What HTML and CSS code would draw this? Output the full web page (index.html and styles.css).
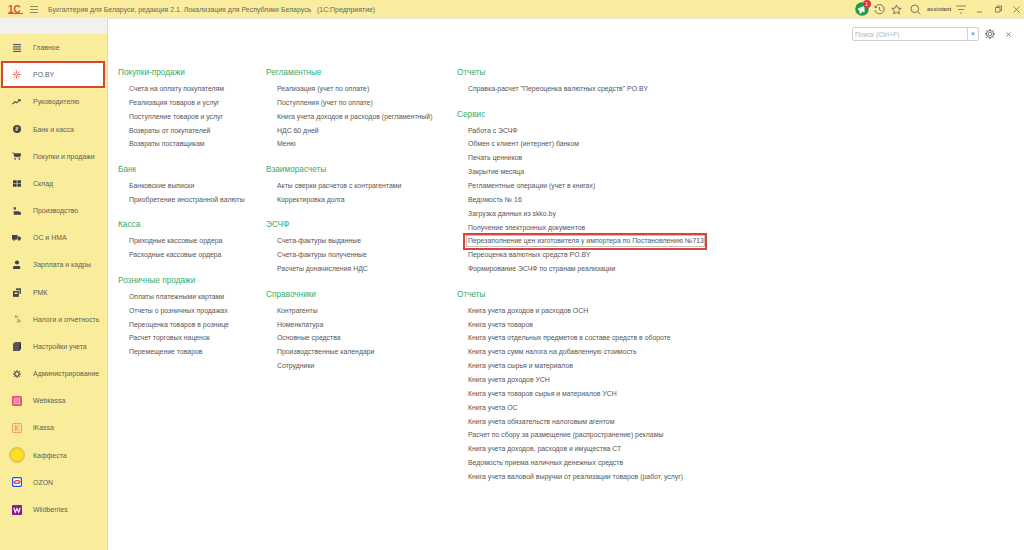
FILE: index.html
```html
<!DOCTYPE html>
<html lang="ru">
<head>
<meta charset="utf-8">
<title>Бухгалтерия для Беларуси</title>
<link rel="stylesheet" href="styles.css">
</head>
<body>
<header class="topbar">
  <svg class="logo" width="16" height="11" viewBox="0 0 16 11"><text x="1" y="8.6" class="logo-text">1С</text><path d="M1 9.5H16" stroke="#e0503a" stroke-width="1"/></svg>
  <svg class="burger" width="8" height="7" viewBox="0 0 8 7"><path d="M0 .5H8M0 3.5H8M0 6.5H8" stroke="#8a8a70" stroke-width="1"/></svg>
  <div class="app-title">Бухгалтерия для Беларуси, редакция 2.1. Локализация для Республики Беларусь&nbsp;&nbsp; (1С:Предприятие)</div>
  <div class="tools">
    <span class="notify">
      <svg width="14" height="14" viewBox="0 0 14 14"><circle cx="7" cy="7" r="6.8" fill="#1e9a4a"/><path d="M3 6.5L9.5 3.5V10.5L6.5 9.2V11.5H4.5V8.4L3 8Z" fill="#fff"/></svg>
      <span class="badge">1</span>
    </span>
    <svg class="tool-clock" width="11" height="11" viewBox="0 0 11 11"><path d="M1.5 3A4.6 4.6 0 1 1 1 6M1 1.5V3.5H3M5.5 3V5.8L7.5 7" fill="none" stroke="#555" stroke-width=".8"/></svg>
    <svg class="tool-star" width="11" height="11" viewBox="0 0 11 11"><path d="M5.5 1L6.9 4.1L10.2 4.4L7.7 6.6L8.4 9.9L5.5 8.2L2.6 9.9L3.3 6.6L.8 4.4L4.1 4.1Z" fill="none" stroke="#555" stroke-width=".8"/></svg>
    <svg class="tool-search" width="11" height="11" viewBox="0 0 11 11"><circle cx="4.8" cy="4.8" r="3.8" fill="none" stroke="#555" stroke-width=".8"/><path d="M7.6 7.6L10.4 10.4" stroke="#555" stroke-width=".8"/></svg>
    <span class="user">assistant</span>
    <svg class="tool-funnel" width="10" height="9" viewBox="0 0 10 9"><path d="M0 1H10M2 4.5H8M4 8H6" stroke="#666" stroke-width=".8"/></svg>
    <svg class="win-min" width="7" height="8" viewBox="0 0 7 8"><path d="M1 7H6" stroke="#666" stroke-width=".8"/></svg>
    <svg class="win-max" width="7" height="8" viewBox="0 0 7 8"><path d="M.5 2.5H5V7H.5ZM2 2.5V1H6.5V5.5H5" fill="none" stroke="#666" stroke-width=".8"/></svg>
    <svg class="win-close" width="7" height="7" viewBox="0 0 7 7"><path d="M.5 .5L6.5 6.5M6.5 .5L.5 6.5" stroke="#666" stroke-width=".8"/></svg>
  </div>
</header>
<div class="body">
  <aside class="sidebar">
    <div class="side-strip"></div>
    <nav class="side-list">
      <a class="side-item"><span class="ico"><svg width="8" height="8" viewBox="0 0 8 8"><path d="M0 .6H8M0 2.9H8M0 5.1H8M0 7.4H8" stroke="#444" stroke-width="1"/></svg></span>Главное</a>
      <a class="side-item active"><span class="ico"><svg width="9" height="9" viewBox="0 0 10 10"><path d="M5 .5V4M5 6V9.5M.5 5H4M6 5H9.5M1.8 1.8L4 4M6 6L8.2 8.2M8.2 1.8L6 4M4 6L1.8 8.2" stroke="#e2412f" stroke-width=".8"/></svg></span>PO.BY</a>
      <a class="side-item"><span class="ico"><svg width="9" height="6" viewBox="0 0 11 7"><path d="M.5 6L3.5 3L5.5 4.5L9.5 1M7.5 .8H10V3" fill="none" stroke="#444" stroke-width="1.3"/></svg></span>Руководителю</a>
      <a class="side-item"><span class="ico"><svg width="8" height="8" viewBox="0 0 10 10"><circle cx="5" cy="5" r="5" fill="#444"/><path d="M4 7.5V2.8H6.2V5H4M3 6.2H6" fill="none" stroke="#f9ec9b" stroke-width=".9"/></svg></span>Банк и касса</a>
      <a class="side-item"><span class="ico"><svg width="9" height="8" viewBox="0 0 11 10"><path d="M0 1H2L2.6 2H11L10 6H3L2 1.5" fill="#444" stroke="#444" stroke-width=".6"/><circle cx="3.7" cy="8.5" r="1.1" fill="#444"/><circle cx="9" cy="8.5" r="1.1" fill="#444"/></svg></span>Покупки и продажи</a>
      <a class="side-item"><span class="ico"><svg width="8" height="7" viewBox="0 0 11 9"><path d="M0 0H5V4H0ZM6 0H11V4H6ZM0 5H5V9H0ZM6 5H11V9H6Z" fill="#444"/></svg></span>Склад</a>
      <a class="side-item"><span class="ico"><svg width="8" height="8" viewBox="0 0 11 10"><path d="M1 10V4.5L3.5 6V4.5L6 6V4.5L11 7V10ZM1 0H4V3H1Z" fill="#444"/></svg></span>Производство</a>
      <a class="side-item"><span class="ico"><svg width="9" height="7" viewBox="0 0 12 9"><path d="M0 1H7.5V7H0ZM8 3H10.5L12 5V7H8Z" fill="#444"/><circle cx="3" cy="7.5" r="1.3" fill="#444"/><circle cx="9.5" cy="7.5" r="1.3" fill="#444"/></svg></span>ОС и НМА</a>
      <a class="side-item"><span class="ico"><svg width="8" height="9" viewBox="0 0 10 11"><circle cx="5" cy="3" r="2.6" fill="#444"/><path d="M1 7.5H9V11H0V9Z" fill="#444"/></svg></span>Зарплата и кадры</a>
      <a class="side-item"><span class="ico"><svg width="8" height="9" viewBox="0 0 11 12"><path d="M0 4H8V12H0Z" fill="#444"/><path d="M4 0H11V8H9V3H4Z" fill="#555"/><path d="M2 6H6V8H2Z" fill="#f9ec9b"/></svg></span>РМК</a>
      <a class="side-item"><span class="ico ico-tax"><span>Кт</span><span class="tax-b">Дт</span></span>Налоги и отчетность</a>
      <a class="side-item"><span class="ico"><svg width="8" height="9" viewBox="0 0 10 11"><path d="M0 2L3 0H10V8L8 11H0Z" fill="#555"/><path d="M8 3V11L10 8V1Z" fill="#333"/></svg></span>Настройки учета</a>
      <a class="side-item"><span class="ico"><svg width="8" height="8" viewBox="0 0 11 11"><circle cx="5.5" cy="5.5" r="3" fill="none" stroke="#444" stroke-width="1.5"/><path d="M5.5 0V2M5.5 9V11M0 5.5H2M9 5.5H11M1.6 1.6L3 3M8 8L9.4 9.4M9.4 1.6L8 3M3 8L1.6 9.4" stroke="#444" stroke-width="1.3"/></svg></span>Администрирование</a>
      <a class="side-item"><span class="ico"><svg width="10" height="10" viewBox="0 0 11 11"><rect width="11" height="11" rx="1.5" fill="#ef4f78"/><rect x="2" y="2" width="7" height="7" fill="#f9b6c8"/><path d="M2 4.3H9M2 6.6H9M4.3 2V9M6.6 2V9" stroke="#ef4f78" stroke-width=".6"/></svg></span>Webkassa</a>
      <a class="side-item"><span class="ico"><svg width="10" height="10" viewBox="0 0 11 11"><rect x=".5" y=".5" width="10" height="10" rx="1" fill="#fbdf9c" stroke="#f2963f"/><path d="M4 2.5V8.5M7.5 2.5L4.5 5.5L7.5 8.5" fill="none" stroke="#f0903c"/></svg></span>iKassa</a>
      <a class="side-item"><span class="ico"><svg width="16" height="16" viewBox="0 0 16 16"><circle cx="8" cy="8" r="7.5" fill="#f4d23a" stroke="#e0bc5c"/><circle cx="8" cy="8" r="5" fill="#fbe21c"/></svg></span>Каффеста</a>
      <a class="side-item"><span class="ico"><svg width="10" height="10" viewBox="0 0 11 11"><rect width="11" height="11" rx="2" fill="#1c50e8"/><rect x="1.3" y="1.3" width="8.4" height="8.4" rx="1" fill="#fff"/><ellipse cx="5.5" cy="5.5" rx="3.8" ry="2.2" fill="#ea2b3a" transform="rotate(-10 5.5 5.5)"/><ellipse cx="5.5" cy="5.5" rx="2.2" ry=".9" fill="#fff" transform="rotate(-10 5.5 5.5)"/></svg></span>OZON</a>
      <a class="side-item"><span class="ico"><svg width="10" height="10" viewBox="0 0 11 11"><rect width="11" height="11" rx="1" fill="#8a1c8e"/><path d="M2 3L3.6 8L5.5 4L7.4 8L9 3" fill="none" stroke="#fff" stroke-width="1.2"/></svg></span>Wildberries</a>
    </nav>
  </aside>
  <main class="main">
    <div class="search-row">
      <div class="search">
        <span class="search-input">Поиск (Ctrl+F)</span>
        <span class="search-clear">×</span>
      </div>
      <svg class="gear" width="10" height="10" viewBox="0 0 11 11"><circle cx="5.5" cy="5.5" r="2" fill="none" stroke="#555" stroke-width=".8"/><circle cx="5.5" cy="5.5" r="3.9" fill="none" stroke="#555" stroke-width=".9"/><path d="M5.5 0V1.6M5.5 9.4V11M0 5.5H1.6M9.4 5.5H11M1.6 1.6L2.7 2.7M8.3 8.3L9.4 9.4M9.4 1.6L8.3 2.7M2.7 8.3L1.6 9.4" stroke="#555" stroke-width="1.1"/></svg>
      <svg class="close" width="5" height="5" viewBox="0 0 5 5"><path d="M.5 .5L4.5 4.5M4.5 .5L.5 4.5" stroke="#666" stroke-width=".8"/></svg>
    </div>
    <div class="columns">
      <div class="col col-1">
        <section class="group"><h2>Покупки-продажи</h2><a>Счета на оплату покупателям</a><a>Реализация товаров и услуг</a><a>Поступление товаров и услуг</a><a>Возвраты от покупателей</a><a>Возвраты поставщикам</a></section>
        <section class="group"><h2>Банк</h2><a>Банковские выписки</a><a>Приобретение иностранной валюты</a></section>
        <section class="group"><h2>Касса</h2><a>Приходные кассовые ордера</a><a>Расходные кассовые ордера</a></section>
        <section class="group"><h2>Розничные продажи</h2><a>Оплаты платежными картами</a><a>Отчеты о розничных продажах</a><a>Переоценка товаров в рознице</a><a>Расчет торговых наценок</a><a>Перемещение товаров</a></section>
      </div>
      <div class="col col-2">
        <section class="group"><h2>Регламентные</h2><a>Реализация (учет по оплате)</a><a>Поступления (учет по оплате)</a><a>Книга учета доходов и расходов (регламентный)</a><a>НДС 60 дней</a><a>Меню</a></section>
        <section class="group"><h2>Взаиморасчеты</h2><a>Акты сверки расчетов с контрагентами</a><a>Корректировка долга</a></section>
        <section class="group"><h2>ЭСЧФ</h2><a>Счета-фактуры выданные</a><a>Счета-фактуры полученные</a><a>Расчеты доначисления НДС</a></section>
        <section class="group"><h2>Справочники</h2><a>Контрагенты</a><a>Номенклатура</a><a>Основные средства</a><a>Производственные календари</a><a>Сотрудники</a></section>
      </div>
      <div class="col col-3">
        <section class="group"><h2>Отчеты</h2><a>Справка-расчет "Переоценка валютных средств" PO.BY</a></section>
        <section class="group"><h2>Сервис</h2><a>Работа с ЭСЧФ</a><a>Обмен с клиент (интернет) банком</a><a>Печать ценников</a><a>Закрытие месяца</a><a>Регламентные операции (учет в книгах)</a><a>Ведомость № 16</a><a>Загрузка данных из skko.by</a><a>Получение электронных документов</a><a class="focused">Перезаполнение цен изготовителя у импортера по Постановлению №713</a><a>Переоценка валютных средств PO.BY</a><a>Формирование ЭСЧФ по странам реализации</a></section>
        <section class="group"><h2>Отчеты</h2><a>Книга учета доходов и расходов ОСН</a><a>Книга учета товаров</a><a>Книга учета отдельных предметов в составе средств в обороте</a><a>Книга учета сумм налога на добавленную стоимость</a><a>Книга учета сырья и материалов</a><a>Книга учета доходов УСН</a><a>Книга учета товаров сырья и материалов УСН</a><a>Книга учета ОС</a><a>Книга учета обязательств налоговым агентом</a><a>Расчет по сбору за размещение (распространение) рекламы</a><a>Книга учета доходов, расходов и имущества СТ</a><a>Ведомость приема наличных денежных средств</a><a>Книга учета валовой выручки от реализации товаров (работ, услуг)</a></section>
      </div>
    </div>
  </main>
</div>
</body>
</html>
```
FILE: styles.css
```css
*, *::before, *::after { box-sizing: border-box; }
html, body { margin: 0; height: 100%; }
body {
  width: 1024px;
  height: 550px;
  overflow: hidden;
  background: #fff;
  font-family: "Liberation Sans", Arial, sans-serif;
  font-size: 6.9px;
  color: #555;
  display: flex;
  flex-direction: column;
}
.topbar {
  height: 18px;
  flex: none;
  background: #fbed9f;
  display: flex;
  align-items: center;
  padding-left: 7px;
}
.logo { flex: none; }
.logo-text { font: bold 10px "Liberation Sans", sans-serif; fill: #e0503a; }
.burger { margin-left: 7px; flex: none; }
.app-title { margin-left: 10px; font-size: 6.94px; color: #66665a; white-space: nowrap; }
.tools { margin-left: auto; display: flex; align-items: center; }
.notify { position: relative; display: flex; }
.badge {
  position: absolute;
  top: -2px;
  right: -2px;
  width: 8px;
  height: 8px;
  border-radius: 50%;
  background: #e8313f;
  color: #fff;
  font-size: 5.5px;
  line-height: 8px;
  text-align: center;
}
.tool-clock { margin-left: 5.5px; }
.tool-star { margin-left: 6px; }
.tool-search { margin-left: 8px; }
.user { margin-left: 6px; width: 24px; font-size: 5.6px; font-weight: bold; color: #666; white-space: nowrap; }
.tool-funnel { margin-left: 5px; }
.win-min { margin-left: 9.5px; }
.win-max { margin-left: 12px; }
.win-close { margin-left: 11px; margin-right: 4.5px; }
.body { flex: 1; display: flex; min-height: 0; }
.sidebar { width: 107px; flex: none; display: flex; flex-direction: column; background: #f9ec9b; }
.side-strip { height: 16px; background: #f1f1ee; flex: none; }
.side-list { display: flex; flex-direction: column; }
.side-item {
  height: 27.18px;
  display: flex;
  align-items: center;
  white-space: nowrap;
  font-size: 6.95px;
  color: #5f5f55;
  margin-left: 1px;
}
.ico { width: 32px; flex: none; display: flex; justify-content: center; padding-right: 1px; }
.active { background: #fff; width: 104px; outline: 2px solid #d9433a; outline-offset: -2px; }
.ico-tax { flex-direction: column; align-items: center; font-size: 3.5px; line-height: 4px; color: #444; }
.tax-b { padding-left: 5px; }
.main {
  flex: 1;
  min-width: 0;
  border-left: 1px solid #d8d8d0;
  border-top: 1px solid #e6e6e0;
  padding-top: 8px;
  background: #fff;
}
.search-row { display: flex; align-items: center; justify-content: flex-end; height: 14px; padding-right: 13px; }
.search {
  width: 127px;
  height: 14px;
  border: 1px solid #d0d0d0;
  border-radius: 2px;
  display: flex;
  align-items: center;
  font-size: 6.9px;
  color: #b5b5b5;
}
.search-input { flex: 1; padding-left: 2px; }
.search-clear { width: 11px; height: 100%; border-left: 1px solid #d0d0d0; text-align: center; color: #666; line-height: 11px; }
.gear { margin-left: 6px; }
.close { margin-left: 11px; }
.columns { display: flex; padding-left: 10px; margin-top: 25px; }
.col { flex: none; }
.col-1 { width: 148px; }
.col-2 { width: 191px; }
.group { display: flex; flex-direction: column; margin-bottom: 11.7px; }
.group h2 {
  margin: 0 0 2px;
  font-size: 8.25px;
  line-height: 14px;
  font-weight: normal;
  color: #35ab6b;
  white-space: nowrap;
}
.group a {
  height: 13.86px;
  line-height: 13.86px;
  padding-left: 11px;
  white-space: nowrap;
  color: #555;
}
.group a.focused {
  position: relative;
  align-self: flex-start;
  width: 250px;
}
.group a.focused::before {
  content: "";
  position: absolute;
  left: 9px;
  top: 1px;
  width: 239px;
  height: 12px;
  border: 1px solid #c4c4c4;
}
.group a.focused::after {
  content: "";
  position: absolute;
  left: 6px;
  top: -1px;
  width: 244px;
  height: 17px;
  border: 2px solid #d9433a;
}
```
